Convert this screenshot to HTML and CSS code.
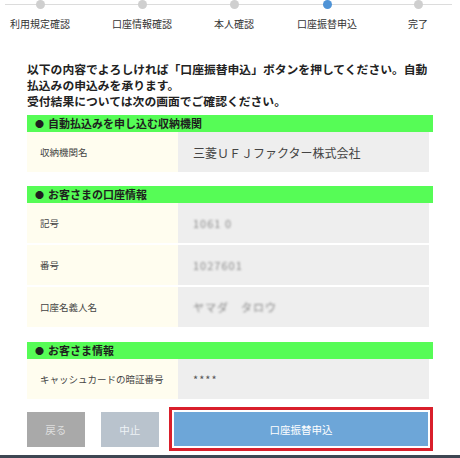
FILE: index.html
```html
<!DOCTYPE html>
<html lang="ja">
<head>
<meta charset="utf-8">
<title>口座振替申込</title>
<link rel="stylesheet" href="styles.css">
</head>
<body>
<div class="page">
  <div class="stepper">
    <div class="step"><span class="dot"></span><span class="step-label">利用規定確認</span></div>
    <div class="step"><span class="dot"></span><span class="step-label">口座情報確認</span></div>
    <div class="step"><span class="dot"></span><span class="step-label">本人確認</span></div>
    <div class="step"><span class="dot active"></span><span class="step-label">口座振替申込</span></div>
    <div class="step"><span class="dot"></span><span class="step-label">完了</span></div>
  </div>

  <div class="content">
    <p class="intro">以下の内容でよろしければ「口座振替申込」ボタンを押してください。自動<br>払込みの申込みを承ります。<br>受付結果については次の画面でご確認ください。</p>

    <section class="section first">
      <h2 class="section-head"><span class="bullet">●</span>自動払込みを申し込む収納機関</h2>
      <div class="row"><div class="label">収納機関名</div><div class="value">三菱ＵＦＪファクター株式会社</div></div>
    </section>

    <section class="section">
      <h2 class="section-head"><span class="bullet">●</span>お客さまの口座情報</h2>
      <div class="row"><div class="label">記号</div><div class="value"><span class="masked">1061 0</span></div></div>
      <div class="row"><div class="label">番号</div><div class="value"><span class="masked">1027601</span></div></div>
      <div class="row"><div class="label">口座名義人名</div><div class="value"><span class="masked">ヤマダ　タロウ</span></div></div>
    </section>

    <section class="section">
      <h2 class="section-head"><span class="bullet">●</span>お客さま情報</h2>
      <div class="row"><div class="label">キャッシュカードの暗証番号</div><div class="value stars">****</div></div>
    </section>

    <div class="actions">
      <button class="btn btn-back">戻る</button>
      <button class="btn btn-cancel">中止</button>
      <div class="primary-frame"><button class="btn btn-primary">口座振替申込</button></div>
    </div>
  </div>
  <div class="bottom-bar"></div>
</div>
</body>
</html>
```

FILE: styles.css
```css
* { box-sizing: border-box; }
html, body { margin: 0; padding: 0; background: #fff; }
body {
  font-family: "Noto Sans CJK JP", "Noto Sans", sans-serif;
  color: #333;
  width: 460px;
  height: 458px;
  overflow: hidden;
}
.page { width: 460px; height: 458px; }

.stepper {
  position: relative;
  display: grid;
  grid-template-columns: 80px 124px 60px 126px 56px;
  height: 36px;
}
.stepper::before {
  content: "";
  position: absolute;
  left: 5px;
  right: 8px;
  top: 4px;
  height: 1px;
  background: #dcdcdc;
}
.step {
  display: flex;
  flex-direction: column;
  align-items: center;
}
.dot {
  position: relative;
  z-index: 1;
  width: 9px;
  height: 9px;
  border-radius: 50%;
  background: #cfcfcf;
}
.dot.active { background: #4f93d6; }
.step-label {
  margin-top: 9px;
  font-size: 10px;
  line-height: 12px;
  color: #333;
  white-space: nowrap;
}

.content { padding: 0 27px; }
.intro {
  margin: 25px 0 6px;
  font-size: 11.8px;
  line-height: 16px;
  font-weight: bold;
  color: #222;
  white-space: nowrap;
}

.section { margin-top: 14px; }
.section.first { margin-top: 0; }
.section:last-of-type { margin-top: 15px; }
.section-head {
  margin: 0;
  height: 17px;
  line-height: 17px;
  background: #56fc56;
  padding-left: 8px;
  font-size: 11px;
  font-weight: bold;
  color: #1e1e1e;
  display: flex;
  align-items: center;
}
.bullet {
  font-size: 9px;
  width: 12px;
  margin-right: 1px;
  display: inline-block;
}
.row {
  display: grid;
  grid-template-columns: 151px 251px;
  height: 40px;
}
.row + .row { margin-top: 2px; }
.label {
  background: #fffdef;
  padding-left: 13px;
  font-size: 9.5px;
  color: #444;
  display: flex;
  align-items: center;
  white-space: nowrap;
}
.value {
  background: #eeeeee;
  padding-left: 15px;
  font-size: 12px;
  color: #444;
  display: flex;
  align-items: center;
}
.masked {
  color: #8a8a8a;
  font-size: 11px;
  letter-spacing: 1px;
  filter: blur(1px);
}
.stars { font-size: 11px; letter-spacing: 1px; color: #555; }

.actions {
  margin-top: 8px;
  display: flex;
  align-items: center;
  height: 44px;
}
.btn {
  border: 0;
  font-family: inherit;
  font-size: 10.5px;
  height: 35px;
  padding: 0;
  cursor: pointer;
}
.btn-back { width: 58px; background: #a9a9a9; color: #dedede; }
.btn-cancel { width: 59px; margin-left: 16px; background: #b9c3cd; color: #eef2f6; }
.primary-frame {
  margin-left: 10px;
  width: 266px;
  height: 44px;
  border: 3px solid #d91f2b;
  padding: 2px;
  background: #fff;
}
.btn-primary { width: 100%; height: 34px; background: #6da6d8; color: #fff; }

.bottom-bar {
  margin-top: 4px;
  height: 3px;
  background: #3d4652;
}
```
